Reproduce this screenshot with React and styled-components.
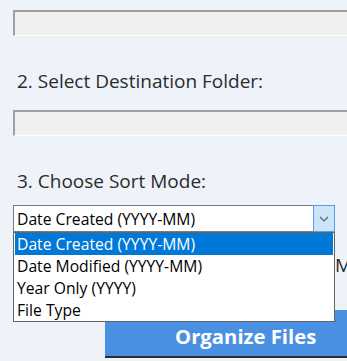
import React from 'react';
import styled, { createGlobalStyle } from 'styled-components';

const Global = createGlobalStyle`
  html, body {
    margin: 0;
    padding: 0;
    background: #eef2f9;
    overflow: hidden;
  }
  body {
    font-family: "Open Sans", "Noto Sans", sans-serif;
  }
`;

const options = [
  'Date Created (YYYY-MM)',
  'Date Modified (YYYY-MM)',
  'Year Only (YYYY)',
  'File Type',
];

function App() {
  return (
    <Page>
      <Global />
      <PathBox />
      <Label>2. Select Destination Folder:</Label>
      <PathBox />
      <Label>3. Choose Sort Mode:</Label>
      <ComboWrap>
        <Combo>
          <ComboText>{options[0]}</ComboText>
          <ArrowButton>
            <svg width="10" height="6" viewBox="0 0 10 6">
              <path d="M1 1 L5 5 L9 1" fill="none" stroke="#606060" strokeWidth="1.2" />
            </svg>
          </ArrowButton>
        </Combo>
        <List>
          {options.map((o, i) => (
            <Item key={o} selected={i === 0}>{o}</Item>
          ))}
        </List>
      </ComboWrap>
      <Preview>Move files</Preview>
      <ButtonRow>
        <OrganizeButton>Organize Files</OrganizeButton>
      </ButtonRow>
    </Page>
  );
}

const Page = styled.div`
  width: 347px;
  height: 361px;
  padding: 10px 0 0 13px;
  box-sizing: border-box;
  display: flex;
  flex-direction: column;
  overflow: hidden;
`;

const PathBox = styled.div`
  height: 26px;
  width: 400px;
  flex-shrink: 0;
  box-sizing: border-box;
  background: #f0f0f0;
  border-top: 2px solid #a0a0a0;
  border-left: 2px solid #a0a0a0;
  border-bottom: 1px solid #ffffff;
`;

const Label = styled.div`
  margin: 32px 0 16px 4px;
  height: 26px;
  line-height: 26px;
  font-size: 19px;
  color: #2b2b2b;
  white-space: nowrap;
`;

const ComboWrap = styled.div`
  position: relative;
  margin-top: -5px;
  width: 322px;
  z-index: 2;
`;

const Combo = styled.div`
  height: 27px;
  box-sizing: border-box;
  background: #ffffff;
  border: 1px solid #7a7a7a;
  display: flex;
  align-items: center;
`;

const ComboText = styled.div`
  flex: 1;
  padding-left: 3px;
  font-size: 15.7px;
  color: #000;
  white-space: nowrap;
`;

const ArrowButton = styled.div`
  width: 22px;
  height: 27px;
  margin: -1px -1px -1px 0;
  box-sizing: border-box;
  background: #cce4f7;
  border: 1px solid #569de5;
  display: flex;
  align-items: center;
  justify-content: center;
`;

const List = styled.div`
  position: absolute;
  top: 27px;
  left: 0;
  width: 322px;
  box-sizing: border-box;
  background: #ffffff;
  border: 1px solid #646464;
  padding: 0 1px;
`;

const Item = styled.div`
  height: 22px;
  line-height: 22px;
  padding-left: 2px;
  font-size: 15.7px;
  color: ${(p) => (p.selected ? '#ffffff' : '#000000')};
  background: ${(p) => (p.selected ? '#0078d7' : 'transparent')};
  white-space: nowrap;
`;

const Preview = styled.div`
  margin: 21px 0 0 322px;
  height: 24px;
  line-height: 24px;
  font-size: 19px;
  color: #2b2b2b;
  white-space: nowrap;
`;

const ButtonRow = styled.div`
  margin-top: 33px;
  padding-left: 92px;
`;

const OrganizeButton = styled.div`
  width: 300px;
  height: 48px;
  box-sizing: border-box;
  background: #4a90e2;
  border-bottom: 2px solid #2a2a2a;
  color: #ffffff;
  font-weight: 700;
  font-size: 20.3px;
  display: flex;
  align-items: flex-end;
  padding: 0 0 6px 70px;
  white-space: nowrap;
`;

export default App;
